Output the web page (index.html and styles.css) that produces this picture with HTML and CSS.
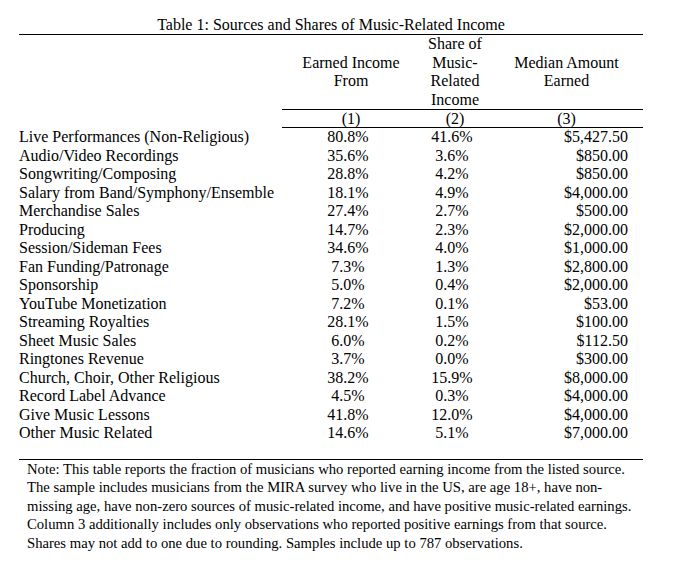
FILE: index.html
```html
<!DOCTYPE html>
<html lang="en">
<head>
<meta charset="utf-8">
<title>Table 1: Sources and Shares of Music-Related Income</title>
<link rel="stylesheet" href="styles.css">
</head>
<body>
<div class="page">
  <div class="title">Table 1: Sources and Shares of Music-Related Income</div>
  <table class="tbl">
    <colgroup>
      <col class="c-label"><col class="c-one"><col class="c-two"><col class="c-three">
    </colgroup>
    <thead>
      <tr class="head">
        <th class="blank"></th>
        <th>Earned Income<br>From</th>
        <th>Share of<br>Music-<br>Related<br>Income</th>
        <th>Median Amount<br>Earned</th>
      </tr>
      <tr class="nums">
        <th class="blank"></th>
        <th>(1)</th>
        <th>(2)</th>
        <th>(3)</th>
      </tr>
    </thead>
    <tbody>
      <tr><td class="lbl">Live Performances (Non-Religious)</td><td class="pct">80.8%</td><td class="pct">41.6%</td><td class="amt">$5,427.50</td></tr>
      <tr><td class="lbl">Audio/Video Recordings</td><td class="pct">35.6%</td><td class="pct">3.6%</td><td class="amt">$850.00</td></tr>
      <tr><td class="lbl">Songwriting/Composing</td><td class="pct">28.8%</td><td class="pct">4.2%</td><td class="amt">$850.00</td></tr>
      <tr><td class="lbl">Salary from Band/Symphony/Ensemble</td><td class="pct">18.1%</td><td class="pct">4.9%</td><td class="amt">$4,000.00</td></tr>
      <tr><td class="lbl">Merchandise Sales</td><td class="pct">27.4%</td><td class="pct">2.7%</td><td class="amt">$500.00</td></tr>
      <tr><td class="lbl">Producing</td><td class="pct">14.7%</td><td class="pct">2.3%</td><td class="amt">$2,000.00</td></tr>
      <tr><td class="lbl">Session/Sideman Fees</td><td class="pct">34.6%</td><td class="pct">4.0%</td><td class="amt">$1,000.00</td></tr>
      <tr><td class="lbl">Fan Funding/Patronage</td><td class="pct">7.3%</td><td class="pct">1.3%</td><td class="amt">$2,800.00</td></tr>
      <tr><td class="lbl">Sponsorship</td><td class="pct">5.0%</td><td class="pct">0.4%</td><td class="amt">$2,000.00</td></tr>
      <tr><td class="lbl">YouTube Monetization</td><td class="pct">7.2%</td><td class="pct">0.1%</td><td class="amt">$53.00</td></tr>
      <tr><td class="lbl">Streaming Royalties</td><td class="pct">28.1%</td><td class="pct">1.5%</td><td class="amt">$100.00</td></tr>
      <tr><td class="lbl">Sheet Music Sales</td><td class="pct">6.0%</td><td class="pct">0.2%</td><td class="amt">$112.50</td></tr>
      <tr><td class="lbl">Ringtones Revenue</td><td class="pct">3.7%</td><td class="pct">0.0%</td><td class="amt">$300.00</td></tr>
      <tr><td class="lbl">Church, Choir, Other Religious</td><td class="pct">38.2%</td><td class="pct">15.9%</td><td class="amt">$8,000.00</td></tr>
      <tr><td class="lbl">Record Label Advance</td><td class="pct">4.5%</td><td class="pct">0.3%</td><td class="amt">$4,000.00</td></tr>
      <tr><td class="lbl">Give Music Lessons</td><td class="pct">41.8%</td><td class="pct">12.0%</td><td class="amt">$4,000.00</td></tr>
      <tr><td class="lbl">Other Music Related</td><td class="pct">14.6%</td><td class="pct">5.1%</td><td class="amt">$7,000.00</td></tr>
    </tbody>
  </table>
  <div class="note">
    Note: This table reports the fraction of musicians who reported earning income from the listed source.<br>
    The sample includes musicians from the MIRA survey who live in the US, are age 18+, have non-<br>
    missing age, have non-zero sources of music-related income, and have positive music-related earnings.<br>
    Column 3 additionally includes only observations who reported positive earnings from that source.<br>
    Shares may not add to one due to rounding. Samples include up to 787 observations.
  </div>
</div>
</body>
</html>
```
FILE: styles.css
```css
html, body {
  margin: 0;
  padding: 0;
  background: #ffffff;
}

body {
  font-family: "Liberation Serif", "Times New Roman", serif;
  color: #000000;
}

.page {
  width: 624px;
  margin-left: 19px;
  padding-top: 15px;
}

.title {
  font-size: 16px;
  line-height: 19px;
  text-align: center;
  border-bottom: 1px solid #000;
}

.tbl {
  width: 624px;
  table-layout: fixed;
  border-collapse: collapse;
  border-spacing: 0;
  font-size: 16px;
  margin-bottom: 16px;
}

.c-label { width: 263px; }
.c-one { width: 138px; }
.c-two { width: 70px; }
.c-three { width: 153px; }

.tbl th,
.tbl td {
  padding: 0;
  font-weight: normal;
  line-height: 18.5px;
}

.tbl th {
  text-align: center;
  vertical-align: middle;
}

.head th {
  border-bottom: 1px solid #000;
}

.nums th {
  border-bottom: 1px solid #000;
  line-height: 17px;
}

.tbl th.blank {
  border-bottom: none;
}

.lbl {
  text-align: left;
  white-space: nowrap;
}

.pct {
  text-align: center;
  padding-right: 6px !important;
}

.amt {
  text-align: right;
  padding-right: 15px !important;
}

.note {
  border-top: 1px solid #000;
  padding-left: 8px;
  font-size: 14.67px;
  line-height: 18.5px;
  white-space: nowrap;
}
```
